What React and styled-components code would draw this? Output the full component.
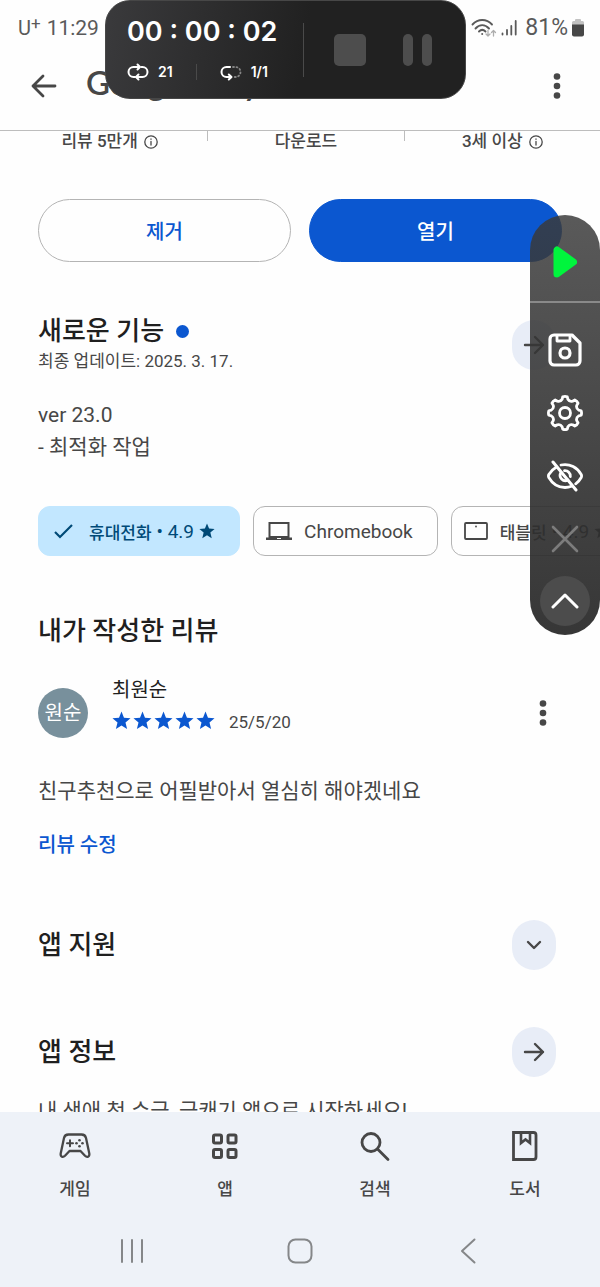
import React from 'react'
import styled, { createGlobalStyle } from 'styled-components'

const GlobalStyle = createGlobalStyle`
  * {
    box-sizing: border-box;
  }

  body {
    margin: 0;
    background: #fefefe;
    font-family: Roboto, 'Noto Sans CJK KR', sans-serif;
    color: #474747;
  }

  button {
    margin: 0;
    padding: 0;
    border: 0;
    background: none;
    color: inherit;
    font: inherit;
    cursor: pointer;
  }

  h1, h2, p {
    margin: 0;
  }

  svg {
    display: block;
    flex: none;
  }
`;

const Screen = styled.div`
  position: relative;
  height: 100vh;
  display: flex;
  flex-direction: column;
  overflow: hidden;
`;

const StatusBar = styled.div`
  flex: none;
  height: 56px;
  padding: 0 16px 0 18px;
  display: flex;
  align-items: center;
  justify-content: space-between;
  font-size: 21px;
  line-height: 26px;
  color: #5a5a5a;
`;

const StatusGroup = styled.div`
  display: flex;
  align-items: center;
  gap: ${({ $gap }) => $gap}px;
`;

const Carrier = styled.span`
  font-size: 20px;

  sup {
    font-size: 17px;
    line-height: 0;
    vertical-align: 6px;
  }
`;

const BatteryLevel = styled.span`
  padding-left: 4px;
  font-size: 23px;
`;

const AppBar = styled.header`
  flex: none;
  padding: 0 35px 14px 28px;
  display: flex;
  align-items: center;
  border-bottom: 1px solid #bdbdbd;
`;

const IconButton = styled.button`
  width: ${({ $width }) => $width || 32}px;
  height: ${({ $height }) => $height || 60}px;
  display: flex;
  align-items: center;
  justify-content: center;
`;

const AppBarTitle = styled.h1`
  flex: 1;
  padding: 0 0 8px 26px;
  font-family: Lato, sans-serif;
  font-size: 33px;
  font-weight: 600;
  line-height: 52px;
`;

const Content = styled.main`
  flex: 1;
  min-height: 0;
  overflow-y: auto;
  overflow-x: hidden;
  scrollbar-width: none;
`;

const Stats = styled.div`
  padding-left: 12px;
  display: flex;
`;

const Stat = styled.div`
  flex: 1;
  height: 21px;
  display: flex;
  align-items: center;
  justify-content: center;
  gap: 6px;
  font-size: 17px;
  font-weight: 500;
  line-height: 21px;
`;

const StatDivider = styled.span`
  width: 1px;
  height: 10px;
  background: #bdbdbd;
`;

const Actions = styled.div`
  padding: 47px 38px 0;
  display: grid;
  grid-template-columns: 1fr 1fr;
  gap: 18px;
`;

const ActionButton = styled.button`
  && {
    height: 63px;
    border: 1px solid ${({ $primary }) => ($primary ? '#0b57d0' : '#b4b4b4')};
    border-radius: 32px;
    background: ${({ $primary }) => ($primary ? '#0b57d0' : 'transparent')};
    color: ${({ $primary }) => ($primary ? '#ffffff' : '#0b57d0')};
    font-size: 20px;
    font-weight: 500;
  }
`;

const Section = styled.section`
  padding: ${({ $top }) => $top}px 44px 0 38px;
`;

const SectionHead = styled.div`
  display: flex;
  align-items: center;
  justify-content: space-between;
`;

const Title = styled.h2`
  display: flex;
  align-items: center;
  gap: 12px;
  font-size: 26px;
  font-weight: 500;
  line-height: 32px;
  color: #1f1f1f;
`;

const NewDot = styled.span`
  width: 13px;
  height: 13px;
  border-radius: 50%;
  background: #0b57d0;
`;

const Updated = styled.p`
  font-size: 17px;
  line-height: 28px;
`;

const RoundButton = styled(IconButton)`
  && {
    width: 44px;
    height: 50px;
    border-radius: 22px;
    background: #e8edf7;
  }
`;

const Body = styled.p`
  padding-top: ${({ $top }) => $top}px;
  font-size: 21px;
  line-height: 32px;
  white-space: nowrap;
`;

const Chips = styled.div`
  padding: 43px 0 0 38px;
  display: flex;
  gap: 13px;
  overflow: hidden;
`;

const Chip = styled.button`
  && {
    flex: none;
    height: 50px;
    padding: 0 24px 0 12px;
    display: flex;
    align-items: center;
    gap: 12px;
    border: 1px solid ${({ $selected }) => ($selected ? '#c2e7ff' : '#b4b4b4')};
    border-radius: 12px;
    background: ${({ $selected }) => ($selected ? '#c2e7ff' : 'transparent')};
    color: ${({ $selected }) => ($selected ? '#004a77' : '#474747')};
    font-size: 19px;
  }
`;

const ChipLabel = styled.span`
  display: flex;
  align-items: center;
  gap: 5px;
`;

const ChipDevice = styled.span`
  font-size: 17px;
  font-weight: 500;
`;

const Review = styled.div`
  padding-top: 29px;
  display: flex;
  align-items: flex-end;
`;

const Avatar = styled.div`
  width: 50px;
  height: 50px;
  border-radius: 50%;
  background: #78909c;
  color: #ffffff;
  font-size: 20px;
  line-height: 50px;
  text-align: center;
`;

const Reviewer = styled.div`
  flex: 1;
  padding: 0 0 2px 24px;
`;

const ReviewerName = styled.div`
  font-size: 20px;
  line-height: 28px;
  color: #1f1f1f;
`;

const Rating = styled.div`
  display: flex;
  align-items: center;
  gap: 2px;
`;

const ReviewDate = styled.span`
  padding: 4px 0 0 12px;
  font-size: 17px;
  line-height: 28px;
`;

const EditLink = styled.a`
  display: inline-block;
  margin-top: 22px;
  font-size: 20px;
  font-weight: 500;
  line-height: 32px;
  color: #0b57d0;
  text-decoration: none;
`;

const BottomBar = styled.footer`
  flex: none;
  background: #eef2f8;
`;

const Tabs = styled.nav`
  display: grid;
  grid-template-columns: repeat(4, 1fr);
`;

const Tab = styled.button`
  && {
    padding-top: 18px;
    display: flex;
    flex-direction: column;
    align-items: center;
    gap: 12px;
    font-size: 17px;
    font-weight: 500;
    line-height: 30px;
  }
`;

const SystemNav = styled.div`
  padding: 17px 48px 6px;
  display: grid;
  grid-template-columns: repeat(3, 1fr);
  justify-items: center;
  color: #858789;
`;

const Recorder = styled.div`
  position: absolute;
  top: 0;
  left: 105px;
  width: 361px;
  height: 99px;
  padding: 0 21px;
  display: flex;
  align-items: center;
  border: 1px solid #474747;
  border-radius: 25px;
  background: linear-gradient(100deg, #3a3a3c 0%, #212121 55%);
  color: #ffffff;
  font-family: Inter, sans-serif;
`;

const RecorderInfo = styled.div`
  flex: 1;
  padding-bottom: 4px;
`;

const RecorderButtons = styled.div`
  padding: 0 10px 0 30px;
  display: flex;
  gap: 36px;
`;

const Timer = styled.div`
  font-size: 27px;
  font-weight: 600;
  line-height: 40px;
  white-space: nowrap;
`;

const Counts = styled.div`
  padding-top: 8px;
  display: flex;
  align-items: center;
  gap: 9px;
  font-size: 14px;
  font-weight: 600;
  line-height: 24px;
`;

const Rule = styled.span`
  width: 1px;
  height: ${({ $height }) => $height}px;
  margin: 0 ${({ $space }) => $space}px;
  background: #4a4a4a;
`;

const FloatingMenu = styled.aside`
  position: absolute;
  top: 215px;
  right: 0;
  width: 70px;
  padding: 16px 0 9px;
  display: flex;
  flex-direction: column;
  align-items: center;
  border-radius: 35px;
  background: linear-gradient(rgba(58, 58, 58, 0.84), rgba(42, 42, 42, 0.94));
  color: #ffffff;
`;

const MenuRule = styled.div`
  width: 100%;
  height: 2px;
  margin: 8px 0 15px;
  background: #8a8a8a;
`;

const CollapseButton = styled(IconButton)`
  && {
    width: 50px;
    height: 50px;
    margin-top: 6px;
    border-radius: 50%;
    background: #4c4c4c;
  }
`;

const Icon = ({ w, h, box, stroke = 2, children }) => (
  <svg
    width={w}
    height={h}
    viewBox={box || `0 0 ${w} ${h}`}
    fill="none"
    stroke="currentColor"
    strokeWidth={stroke}
    strokeLinecap="round"
    strokeLinejoin="round"
    aria-hidden="true"
  >
    {children}
  </svg>
)

const Star = ({ size, color }) => (
  <svg width={size} height={size} viewBox="0 0 20 20" fill={color} aria-hidden="true">
    <path d="M10 .5 12.6 7 19.500 7.500 14.200 12 15.900 19 10 15.200 4.100 19 5.800 12 .5 7.500 7.400 7Z" />
  </svg>
)

const ArrowRight = () => (
  <Icon w={22} h={20} stroke={2.4}>
    <path d="M2 10h18M12 2l8 8-8 8" />
  </Icon>
)

const Info = () => (
  <Icon w={14} h={14} stroke={1.3}>
    <circle cx="7" cy="7" r="6.2" />
    <path d="M7 6.4v3.6M7 4v.3" />
  </Icon>
)

const Dots = () => (
  <svg width="8" height="26" viewBox="0 0 8 26" fill="currentColor" aria-hidden="true">
    <circle cx="4" cy="3.5" r="3.3" />
    <circle cx="4" cy="13" r="3.3" />
    <circle cx="4" cy="22.5" r="3.3" />
  </svg>
)

const Wifi = () => (
  <Icon w={26} h={20} stroke={1.9}>
    <path d="M1.500 6.500C7 .500 15.500 .500 21 6.500M4.500 10.500C8.500 6 14 6 18 10.500M8 13.500C10 11.500 12.500 11.500 14.500 13.500" />
    <circle cx="11.200" cy="16" r="1" fill="currentColor" stroke="none" />
    <path d="M17 12.500v5.500M15 16l2 2 2-2M22.500 18v-5.500M20.500 14.500l2-2 2 2" stroke="#adadad" strokeWidth="1.300" />
  </Icon>
)

const Signal = () => (
  <Icon w={16} h={16} stroke={1.8}>
    <path d="M1.500 13.500v1M6 10v4.500M10.300 6v8.500M14.700 1v13.500" />
  </Icon>
)

const Battery = () => (
  <svg width="12" height="18" viewBox="0 0 12 18" aria-hidden="true">
    <path d="M3 1q0-1 1-1h4q1 0 1 1v1h1.500q1.500 0 1.500 1.500V8H0V3.500Q0 2 1.500 2H3z" fill="#c2c2c2" />
    <path d="M0 5.500h12v10q0 2-2 2H2q-2 0-2-2z" fill="#474747" />
  </svg>
)

const Repeat = () => (
  <Icon w={22} h={18} stroke={2}>
    <path d="M8 14H6.500a5 5 0 0 1 0-10H12.500M10.500 1.500 13 4l-2.500 2.500" />
    <path d="M14.500 4h1a5 5 0 0 1 0 10H9.500M11.500 11.500 9 14l2.500 2.500" />
  </Icon>
)

const RepeatPart = () => (
  <Icon w={22} h={18} stroke={2}>
    <path d="M11 14H6.500a5 5 0 0 1 0-10H10M8.800 11.500l2.700 2.500-2.700 2.500" />
    <path d="M13 4h2.500a5 5 0 0 1 0 10H14" stroke="#858585" strokeWidth="1.800" strokeDasharray="1 2.500" />
  </Icon>
)

// eight rounded teeth around an 18,18 centre
const gearPath = Array.from({ length: 8 }, (_, i) => {
  const at = (deg, r) => {
    const a = ((i * 45 + deg) * Math.PI) / 180
    return `${(18 + r * Math.sin(a)).toFixed(2)} ${(18 - r * Math.cos(a)).toFixed(2)}`
  }
  return `${i ? 'L' : 'M'}${at(-8, 16.3)}Q${at(0, 17)} ${at(8, 16.3)}L${at(12, 14)}Q${at(22.5, 11.8)} ${at(33, 14)}`
}).join('') + 'Z'

const tabs = [
  {
    label: '게임',
    icon: (
      <Icon w={32} h={32} stroke={2.3}>
        <path d="M9.500 4.500h13c2.500 0 4 1.200 4.500 3.500l3.300 15.500c.5 3.500-2.300 4.300-4.300 2.300L21.500 21h-11L6 25.800c-2 2-4.800 1.200-4.300-2.300L5 8c.5-2.300 2-3.500 4.500-3.500Z" />
        <path d="M8 13.300h6M11 10.300v6" strokeWidth="2" />
        <g fill="currentColor" stroke="none">
          <circle cx="20.500" cy="10.300" r="1.300" />
          <circle cx="20.500" cy="16.300" r="1.300" />
          <circle cx="17.500" cy="13.300" r="1.300" />
          <circle cx="23.500" cy="13.300" r="1.300" />
        </g>
      </Icon>
    ),
  },
  {
    label: '앱',
    icon: (
      <Icon w={32} h={32} stroke={3}>
        <rect x="4.500" y="5" width="8" height="8" rx="1.500" />
        <rect x="19" y="5" width="8" height="8" rx="1.500" />
        <rect x="4.500" y="19.500" width="8" height="8" rx="1.500" />
        <rect x="19" y="19.500" width="8" height="8" rx="1.500" />
      </Icon>
    ),
  },
  {
    label: '검색',
    icon: (
      <Icon w={32} h={32} stroke={2.8}>
        <circle cx="12" cy="12.500" r="9" />
        <path d="M18.500 19 29 29.500" />
      </Icon>
    ),
  },
  {
    label: '도서',
    icon: (
      <Icon w={32} h={32} stroke={2.8}>
        <path d="M4.500 2.500h20q2.500 0 2.500 2.500v22q0 2.500-2.500 2.500h-20z" strokeLinejoin="miter" />
        <path d="M12 3v10l4.500-3.500 4.500 3.500V3" strokeWidth="2.600" strokeLinejoin="miter" />
      </Icon>
    ),
  },
]

const AppStatus = () => (
  <StatusBar>
    <StatusGroup $gap={6}>
      <Carrier>U<sup>+</sup></Carrier>
      <span>11:29</span>
    </StatusGroup>
    <StatusGroup $gap={4}>
      <Wifi />
      <Signal />
      <BatteryLevel>81%</BatteryLevel>
      <Battery />
    </StatusGroup>
  </StatusBar>
)

const RecorderPanel = () => (
  <Recorder>
    <RecorderInfo>
      <Timer>00 : 00 : 02</Timer>
      <Counts>
        <Repeat />
        <span>21</span>
        <Rule $height={16} $space={14} />
        <RepeatPart />
        <span>1/1</span>
      </Counts>
    </RecorderInfo>
    <Rule $height={54} $space={0} />
    <RecorderButtons>
      <IconButton aria-label="정지">
        <svg width="32" height="32"><rect width="32" height="32" rx="5" fill="#4d4d4d" /></svg>
      </IconButton>
      <IconButton aria-label="일시정지">
        <svg width="30" height="32" fill="#4d4d4d">
          <rect width="10" height="32" rx="5" />
          <rect x="19" width="10" height="32" rx="5" />
        </svg>
      </IconButton>
    </RecorderButtons>
  </Recorder>
)

const Controls = () => (
  <FloatingMenu>
    <IconButton $height={62} aria-label="재생">
      <svg width="24" height="32" viewBox="0 0 24 32">
        <path d="M4 4v24L20.500 16Z" fill="#00f53d" stroke="#00f53d" strokeWidth="7" strokeLinejoin="round" />
      </svg>
    </IconButton>
    <MenuRule />
    <IconButton $height={63} $width={70} aria-label="저장">
      <Icon w={34} h={34} stroke={3.2}>
        <path d="M6 2h18l8 8v18a4 4 0 0 1-4 4H6a4 4 0 0 1-4-4V6a4 4 0 0 1 4-4Z" />
        <path d="M9 2.500V8h13V2.500" strokeWidth="2.800" />
        <circle cx="17" cy="20" r="5" />
      </Icon>
    </IconButton>
    <IconButton $height={63} $width={70} aria-label="설정">
      <Icon w={36} h={36} stroke={2.8}>
        <path d={gearPath} />
        <circle cx="18" cy="18" r="5.500" />
      </Icon>
    </IconButton>
    <IconButton $height={63} $width={70} aria-label="숨기기">
      <Icon w={36} h={32} stroke={2.8}>
        <path d="M9.500 7C6 9 3.500 11.800 1.800 14.500c-.5 1-.5 2 0 3C5 23 11 27.500 18 27.500c2.500 0 4.500-.4 6.500-1.200M14 5C23 3 30.500 8 34.200 14.500c.5 1 .5 2 0 3-1.400 2.600-3.200 4.700-5.500 6.300" />
        <path d="M14 12.500a5.300 5.300 0 0 0 7 7.500M17.500 10.700a5.300 5.300 0 0 1 5.800 5.800" />
        <path d="M6 2l23 28" strokeWidth="3" />
      </Icon>
    </IconButton>
    <IconButton $height={63} $width={70} aria-label="닫기">
      <Icon w={28} h={28} stroke={2.6}>
        <path d="M2 2l24 24M26 2 2 26" stroke="#7c7c7c" />
      </Icon>
    </IconButton>
    <CollapseButton aria-label="접기">
      <Icon w={28} h={16} stroke={3}>
        <path d="M2 14 14 2l12 12" />
      </Icon>
    </CollapseButton>
  </FloatingMenu>
)

const App = () => (
  <Screen>
    <GlobalStyle />
    <AppStatus />
    <AppBar>
      <IconButton aria-label="뒤로">
        <Icon w={26} h={24} stroke={2.8}>
          <path d="M24 12H2M12 2 2 12l10 10" />
        </Icon>
      </IconButton>
      <AppBarTitle>Google Play</AppBarTitle>
      <IconButton $width={16} aria-label="더보기"><Dots /></IconButton>
    </AppBar>

    <Content>
      <Stats>
        <Stat>리뷰 5만개 <Info /></Stat>
        <StatDivider />
        <Stat>다운로드</Stat>
        <StatDivider />
        <Stat>3세 이상 <Info /></Stat>
      </Stats>

      <Actions>
        <ActionButton>제거</ActionButton>
        <ActionButton $primary>열기</ActionButton>
      </Actions>

      <Section $top={53}>
        <SectionHead>
          <div>
            <Title>새로운 기능 <NewDot /></Title>
            <Updated>최종 업데이트: 2025. 3. 17.</Updated>
          </div>
          <RoundButton aria-label="새로운 기능"><ArrowRight /></RoundButton>
        </SectionHead>
        <Body $top={24}>ver 23.0<br />- 최적화 작업</Body>
      </Section>

      <Chips>
        <Chip $selected>
          <Icon w={26} h={20} stroke={2.2}>
            <path d="M4 11l5 5L21 4" strokeLinecap="butt" strokeLinejoin="miter" />
          </Icon>
          <ChipLabel>
            <ChipDevice>휴대전화</ChipDevice> • 4.9 <Star size={16} color="#004a77" />
          </ChipLabel>
        </Chip>
        <Chip>
          <Icon w={26} h={20} stroke={2}>
            <rect x="3.500" y="2" width="19" height="14" strokeLinejoin="miter" />
            <path d="M0 16.500h26v2.500H0z" fill="currentColor" stroke="none" />
            <path d="M11 17.500h4" stroke="#fefefe" strokeWidth="1" strokeLinecap="butt" />
          </Icon>
          Chromebook
        </Chip>
        <Chip>
          <Icon w={24} h={18} stroke={1.8}>
            <rect x="1" y="1" width="22" height="16" rx="1" />
            <path d="M12 4.500v.1" />
          </Icon>
          <ChipLabel>
            <ChipDevice>태블릿</ChipDevice> • 4.9 <Star size={16} color="#474747" />
          </ChipLabel>
        </Chip>
      </Chips>

      <Section $top={59}>
        <Title>내가 작성한 리뷰</Title>
        <Review>
          <Avatar>원순</Avatar>
          <Reviewer>
            <ReviewerName>최원순</ReviewerName>
            <Rating>
              {[1, 2, 3, 4, 5].map(n => <Star key={n} size={19} color="#0b57d0" />)}
              <ReviewDate>25/5/20</ReviewDate>
            </Rating>
          </Reviewer>
          <IconButton $width={26} $height={50} aria-label="리뷰 옵션"><Dots /></IconButton>
        </Review>
        <Body $top={37}>친구추천으로 어필받아서 열심히 해야겠네요</Body>
        <EditLink href="#review">리뷰 수정</EditLink>
      </Section>

      <Section $top={59}>
        <SectionHead>
          <Title>앱 지원</Title>
          <RoundButton aria-label="앱 지원">
            <Icon w={16} h={10} stroke={2.4}>
              <path d="M2 2l6 6 6-6" />
            </Icon>
          </RoundButton>
        </SectionHead>
      </Section>

      <Section $top={57}>
        <SectionHead>
          <Title>앱 정보</Title>
          <RoundButton aria-label="앱 정보"><ArrowRight /></RoundButton>
        </SectionHead>
        <Body $top={18}>내 생애 첫 수금, 금캐기 앱으로 시작하세요!</Body>
      </Section>
    </Content>

    <BottomBar>
      <Tabs>
        {tabs.map(({ label, icon }) => (
          <Tab key={label}>
            {icon}
            {label}
          </Tab>
        ))}
      </Tabs>
      <SystemNav>
        <IconButton aria-label="최근 앱">
          <Icon w={24} h={24} stroke={2}>
            <path d="M2 1v22M12 1v22M22 1v22" />
          </Icon>
        </IconButton>
        <IconButton aria-label="홈">
          <Icon w={26} h={26} stroke={2}>
            <rect x="1.500" y="1.500" width="23" height="23" rx="7" />
          </Icon>
        </IconButton>
        <IconButton aria-label="이전">
          <Icon w={16} h={26} stroke={2}>
            <path d="M14.500 1.500 2 13l12.500 11.500" />
          </Icon>
        </IconButton>
      </SystemNav>
    </BottomBar>

    <RecorderPanel />
    <Controls />
  </Screen>
)

export default App
